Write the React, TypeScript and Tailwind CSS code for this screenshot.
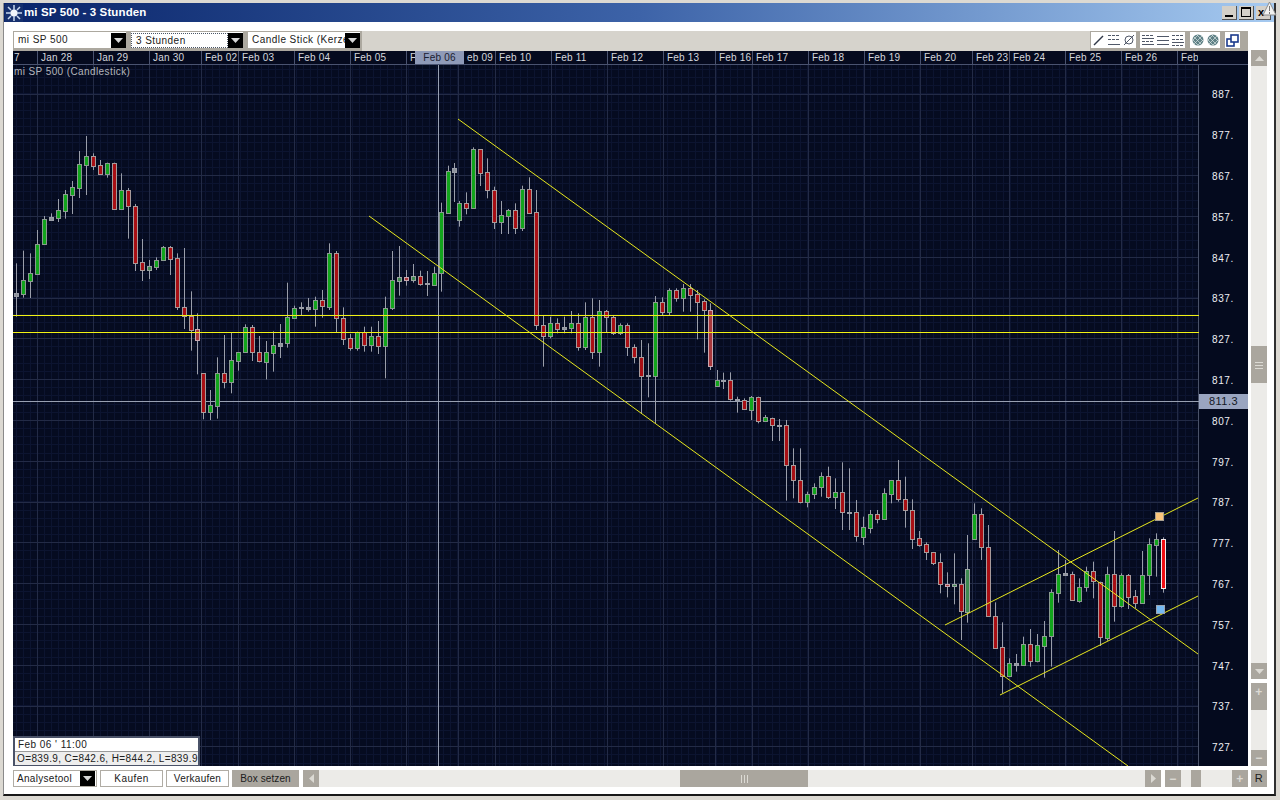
import { ReactNode } from 'react'

type Row = [number, number, number, number, number, string]

// candle rows are [x, wickTop, bodyTop, bodyBottom, wickBottom, colour], read off 3x crops
const GROUPS: { ox: number; oy: number; rows: Row[] }[] = [
  { ox: 10, oy: 130, rows: [
    [19,400,489,497,560,'d'],[40,362,451,491,503,'g'],[61,370,430,452,504,'g'],[82,300,343,431,431,'g'],
    [103,258,268,343,344,'g'],[124,250,262,270,272,'d'],[145,207,240,263,276,'g'],[166,180,193,242,266,'g'],
    [187,153,171,194,252,'g'],[208,63,103,173,204,'g'],[229,18,78,104,195,'g'],[250,70,79,107,120,'r'],
    [271,90,106,131,132,'r'],[292,98,100,131,143,'g'],[313,98,100,236,236,'r'],[334,130,181,236,240,'g'],
    [355,174,181,229,326,'r'],[376,222,229,398,423,'r'],[397,327,397,419,453,'r'],[418,390,408,419,447,'x'],
    [439,382,391,410,420,'g'],[460,348,351,391,392,'g'],[481,348,351,386,435,'r'],[502,370,385,532,540,'r'],
    [523,354,532,559,597,'r'],[544,484,558,599,662,'r'],[562,550,598,630,733,'p'],[580,730,730,845,868,'r'],
    [601,780,826,845,870,'g'],[622,682,730,827,866,'g'],[643,615,730,755,775,'r'],[664,608,691,755,790,'g'],
    [685,667,667,692,722,'g'],[706,583,592,667,667,'g'],[727,585,592,665,693,'r'],[748,618,665,694,697,'r'],
    [769,633,667,695,748,'g'],[790,604,646,668,725,'g'],[811,582,640,647,684,'d'],[832,458,562,640,653,'g'],
    [853,527,533,563,565,'g'],
  ] },
  { ox: 300, oy: 130, rows: [
    [4,517,531,534,555,'d'],[25,504,531,537,545,'d'],[46,500,511,536,590,'g'],[67,480,511,529,563,'r'],
    [88,340,370,530,540,'g'],[109,363,370,565,607,'r'],[130,532,565,626,645,'r'],[151,612,625,653,662,'r'],
    [172,605,606,653,662,'g'],[193,590,607,644,665,'r'],[214,590,619,644,665,'g'],[235,573,619,647,672,'r'],
    [256,500,535,647,745,'g'],[277,363,451,535,540,'g'],[298,348,441,452,497,'x'],[319,420,442,449,467,'p'],
    [340,402,438,450,458,'x'],[361,422,438,461,467,'r'],[382,423,460,463,498,'d'],[403,410,430,464,465,'g'],
    [424,218,247,430,485,'g'],[445,107,124,248,250,'g'],[463,99,114,125,216,'d'],[478,213,220,269,290,'g'],
    [499,187,220,233,253,'r'],[520,52,58,234,237,'g'],[541,58,58,128,168,'r'],[562,85,127,181,205,'r'],
    [583,170,181,275,297,'r'],[604,213,256,275,312,'g'],[625,237,241,257,312,'g'],[646,220,241,293,312,'r'],
    [667,167,178,293,303,'g'],[688,142,178,248,248,'r'],[709,180,247,586,600,'r'],[730,558,586,617,710,'r'],
    [751,560,580,617,625,'g'],[772,565,580,596,610,'r'],[793,560,592,596,610,'d'],[814,543,580,593,610,'g'],
    [835,550,580,650,662,'r'],[856,517,562,650,660,'g'],
  ] },
  { ox: 590, oy: 270, rows: [
    [7,85,142,247,267,'r'],[28,90,124,247,290,'g'],[49,120,124,142,188,'r'],[70,135,142,190,195,'r'],
    [91,160,166,190,195,'g'],[112,160,166,232,258,'r'],[133,223,232,262,280,'r'],[154,210,262,317,430,'r'],
    [175,220,315,318,382,'d'],[196,78,97,317,460,'g'],[217,82,97,125,135,'r'],[238,55,61,125,135,'g'],
    [259,55,61,83,95,'r'],[280,42,55,83,125,'g'],[301,42,55,74,125,'r'],[322,60,73,95,208,'r'],
    [343,88,94,119,248,'r'],[361,100,119,288,300,'p'],[380,300,331,347,350,'g'],[400,308,330,333,357,'d'],
    [421,307,331,388,392,'r'],[442,380,387,390,428,'d'],[463,385,390,418,420,'r'],[484,378,382,419,450,'g'],
    [505,380,382,452,460,'r'],[526,435,441,452,455,'g'],[547,443,443,466,513,'r'],[568,447,465,468,513,'d'],
    [589,450,466,584,692,'r'],[610,535,584,631,685,'r'],[631,535,631,697,700,'r'],[652,665,671,697,712,'g'],
    [673,640,652,671,687,'g'],[694,607,619,652,680,'g'],[715,590,619,682,687,'r'],[736,625,667,682,717,'g'],
    [757,577,667,727,780,'r'],[778,595,725,728,780,'d'],
  ] },
  { ox: 845, oy: 500, rows: [
    [34,0,37,108,125,'r'],[55,50,82,110,135,'g'],[76,30,42,83,100,'g'],[97,30,42,58,70,'r'],
  ] },
  { ox: 880, oy: 450, rows: [
    [13,115,130,208,210,'g'],[34,90,91,131,160,'g'],[55,30,91,146,155,'r'],[76,80,146,179,233,'r'],
    [97,148,179,266,297,'r'],[118,243,265,284,290,'r'],[139,277,283,307,330,'r'],[160,307,307,338,345,'r'],
    [181,310,337,401,430,'r'],[202,367,401,409,442,'p'],[223,310,403,409,463,'x'],[244,385,403,484,570,'r'],
    [262,255,358,485,518,'x'],[281,160,193,267,268,'g'],[302,175,193,290,330,'r'],[323,225,290,499,500,'r'],
    [344,457,499,593,597,'r'],[365,517,592,677,730,'r'],[386,625,640,677,677,'g'],[407,612,640,644,665,'d'],
    [428,560,581,644,645,'g'],[449,537,581,632,650,'r'],[470,552,586,632,637,'g'],[491,513,559,587,683,'g'],
    [512,418,427,559,650,'g'],[533,300,371,428,458,'g'],[554,330,370,374,375,'d'],[575,365,372,451,452,'r'],
    [596,385,412,453,458,'g'],[617,350,362,412,425,'g'],[638,335,362,394,445,'r'],[659,395,395,562,588,'r'],
    [680,350,371,563,572,'g'],[701,243,371,469,515,'r'],[722,370,376,469,473,'g'],[743,372,376,440,477,'r'],
    [764,420,439,460,475,'r'],[785,303,374,460,462,'g'],[806,265,283,374,435,'g'],[827,250,268,284,380,'g'],
    [848,262,268,415,428,'b'],
  ] },
]

const BODY: Record<string, { fill: string; stroke: string }> = {
  g: { fill: '#12a51c', stroke: '#8a9a90' },
  r: { fill: '#a80f14', stroke: '#a89a9a' },
  d: { fill: '#8f949c', stroke: '#9a9ea8' },
  p: { fill: '#a8383c', stroke: '#c8a8b0' },
  x: { fill: '#3f8a50', stroke: '#9aa4a0' },
  b: { fill: '#f00d12', stroke: '#f4e8e8' },
}

const TICKS: [number, string][] = [
  [37,'Jan 28'],[93,'Jan 29'],[149,'Jan 30'],[201,'Feb 02'],[238,'Feb 03'],[294,'Feb 04'],[350,'Feb 05'],
  [406,'F'],[458,'eb 09'],[495,'Feb 10'],[551,'Feb 11'],[607,'Feb 12'],[663,'Feb 13'],[715,'Feb 16'],
  [752,'Feb 17'],[808,'Feb 18'],[864,'Feb 19'],[920,'Feb 20'],[972,'Feb 23'],[1009,'Feb 24'],[1065,'Feb 25'],
  [1121,'Feb 26'],[1177,'Feb'],
]

const PRICES = [887,877,867,857,847,837,827,817,807,797,787,777,767,757,747,737,727]
const priceY = (i: number) => Math.round(93.5 + i * 40.8) + 0.5

function Arrow() {
  return (
    <span className="w-[15px] h-[15px] bg-black flex items-center justify-center shrink-0">
      <svg width="9" height="5"><path d="M0 0h9L4.5 5z" fill="#d8d8d8" /></svg>
    </span>
  )
}

function Combo({ label, focus, w = 'w-[112px]' }: { label: string; focus?: boolean; w?: string }) {
  return (
    <div className={`${w} h-[16px] bg-white flex items-center justify-between`}>
      <span className={`flex-1 h-[15px] overflow-hidden whitespace-nowrap leading-[14px] pl-[4px] ${focus ? 'border border-dotted border-gray-600' : ''}`}>{label}</span>
      <Arrow />
    </div>
  )
}

function Tool({ children }: { children: ReactNode }) {
  return <span className="w-[15px] h-[16px] bg-white flex items-center justify-center">{children}</span>
}

function Lines({ ys }: { ys: number[] }) {
  return (
    <svg width="12" height="12" stroke="#505868">
      {ys.map(y => <path key={y} d={`M0 ${y}.5h12`} strokeDasharray={y % 2 ? '3 1' : undefined} />)}
    </svg>
  )
}

function Hatch() {
  return (
    <svg width="12" height="12">
      <circle cx="6" cy="6" r="5.5" fill="#5f8186" />
      <path d="M2 3l7 7M1 6l5 5M5 1l6 6M10 2L2 10M6 1L1 6M11 6l-5 5" stroke="#d8e4e4" strokeWidth=".7" />
    </svg>
  )
}

function SquareBtn({ children, className = '' }: { children?: ReactNode; className?: string }) {
  return <div className={`bg-[#aaa69e] flex items-center justify-center shrink-0 text-[#dcdad4] ${className}`}>{children}</div>
}

function Plot() {
  const fineV: number[] = []
  for (let x = 16; x < 1199; x += 7) fineV.push(x)
  const fineH: number[] = []
  for (let y = 69; y < 766; y += 8.16) fineH.push(y)
  return (
    <svg className="block shrink-0" width="1186" height="701" viewBox="13 65 1186 701">
      <rect x="13" y="65" width="1186" height="701" fill="#050b20" />
      <g stroke="#0c1430">
        {fineV.map(x => <path key={x} d={`M${x + 0.5} 65V766`} />)}
        {fineH.map(y => <path key={y} d={`M13 ${Math.round(y) + 0.5}H1199`} />)}
      </g>
      <g stroke="#232b46">
        {TICKS.map(([x]) => <path key={x} d={`M${x + 0.5} 65V766`} />)}
        {PRICES.map((p, i) => <path key={p} d={`M13 ${priceY(i)}H1199`} />)}
      </g>
      <path d="M1198.5 65V766" stroke="#4a5268" />
      <path d="M438.5 65V766M13 401.5H1199" stroke="#98a0b2" />
      {GROUPS.flatMap(g => g.rows.map(([zx, wt, bt, bb, wb, c]) => {
        const x = Math.round(g.ox + zx / 3) + 0.5
        const top = Math.round(g.oy + bt / 3) + 0.5
        const bottom = Math.round(g.oy + bb / 3) + 0.5
        return (
          <g key={`${g.ox}-${zx}`}>
            <path d={`M${x} ${g.oy + wt / 3}V${g.oy + wb / 3}`} stroke="#9a9eaa" />
            <rect x={x - 2} y={top} width="4" height={Math.max(bottom - top, 1)} fill={BODY[c].fill} stroke={BODY[c].stroke} />
          </g>
        )
      }))}
      <path d="M13 315.5H1199" stroke="#f2f214" />
      <path d="M13 332.5H1199" stroke="#f2f214" />
      <g stroke="#e8e81e" fill="none">
        <path d="M458 119L1198 654" />
        <path d="M369 216L1128 766" />
        <path d="M945 625L1198 498" />
        <path d="M1000 695L1198 596" />
      </g>
      <rect x="1155.5" y="512.5" width="8" height="8" fill="#fcc67c" stroke="#a8a090" />
      <rect x="1156.5" y="605.5" width="8" height="8" fill="#74b8f2" stroke="#9aa4b0" />
    </svg>
  )
}

export default function App() {
  return (
    <div className="w-[1280px] h-[800px] overflow-hidden bg-[#dcd9d2] pt-[3px] pl-[3px] font-['Liberation_Sans',sans-serif] text-[10px] tracking-[0.45px] text-[#202020] relative">
      <div className="w-[1273px] h-[793px] border-l border-l-[#8a8a8a] border-r-2 border-r-[#303030] border-b-2 border-b-[#181818] bg-white flex flex-col">
        {/* title bar */}
        <div className="h-[19px] shrink-0 bg-gradient-to-r from-[#0a246a] via-[#3d63a8] to-[#a6caf0] flex items-center pl-[1px] pr-[2px]">
          <svg width="18" height="18" viewBox="0 0 18 18" className="shrink-0">
            <rect width="18" height="18" fill="#16306e" />
            <circle cx="9" cy="9" r="3.6" fill="#f2f6fc" />
            <path d="M9 1v5M9 12v5M1 9h5M12 9h5M3 3l3 3M15 3l-3 3M3 15l3-3M15 15l-3-3" stroke="#c8d8f0" strokeWidth="1.5" />
          </svg>
          <span className="ml-[1px] text-white font-bold text-[11.5px] tracking-[0.12px]">mi SP 500 - 3 Stunden</span>
          <div className="ml-auto flex gap-[2px] mr-[1px]">
            <span className="w-[15px] h-[14px] bg-[#d4d0c8] border-r border-b border-[#555] flex items-end justify-center pb-[2px]"><span className="w-[8px] h-[2px] bg-black" /></span>
            <span className="w-[15px] h-[14px] bg-[#d4d0c8] border-r border-b border-[#555] flex items-center justify-center"><span className="w-[10px] h-[10px] border border-t-2 border-black" /></span>
            <span className="w-[15px] h-[14px] bg-[#d4d0c8] border-r border-b border-[#555] text-black text-[11px] leading-[13px] pl-[2px] font-bold">x</span>
          </div>
        </div>

        <div className="flex pl-[9px] pt-[9px] gap-[3px]">
          <div className="w-[1235px] shrink-0 flex flex-col">
            {/* toolbar */}
            <div className="h-[20px] bg-[#d6d3cc] flex items-start">
              <div className="bg-[#aca89f] h-[20px] w-[349px] pt-[1px] pl-[1px] flex gap-[5px]">
                <Combo label="mi SP 500" />
                <Combo label="3 Stunden" focus />
                <Combo label="Candle Stick (Kerze" />
              </div>
              <div className="ml-auto bg-[#aca89f] h-[20px] w-[158px] pt-[1px] pl-[1px] flex">
                <Tool><svg width="11" height="11"><path d="M1 10L10 1" stroke="#303848" strokeWidth="1.4" /></svg></Tool>
                <Tool><Lines ys={[1, 5, 10]} /></Tool>
                <Tool><svg width="12" height="12" fill="none" stroke="#505868"><circle cx="6" cy="6" r="4" /><path d="M1 11L11 1" /></svg></Tool>
                <span className="w-[4px]" />
                <Tool><Lines ys={[1, 4, 7, 10]} /></Tool>
                <Tool><Lines ys={[2, 6, 10]} /></Tool>
                <Tool><Lines ys={[1, 5, 8, 11]} /></Tool>
                <span className="w-[5px]" />
                <Tool><Hatch /></Tool>
                <Tool><Hatch /></Tool>
                <span className="w-[5px]" />
                <Tool>
                  <svg width="13" height="13" fill="white" stroke="#1b3a8c" strokeWidth="1.6"><rect x="1" y="5" width="7" height="7" /><rect x="5" y="1" width="7" height="7" /></svg>
                </Tool>
              </div>
            </div>

            {/* time axis */}
            <div className="h-[14px] bg-[#050a1e] border-b border-[#4a5370] flex text-[#d4d6dc] relative tracking-[0.2px]">
              <span className="w-[24px] overflow-hidden leading-[13px] pl-[1px] shrink-0">7</span>
              {TICKS.map(([x, label], i) => (
                <span
                  key={x}
                  className={`border-l border-[#4a5370] leading-[13px] overflow-hidden whitespace-nowrap shrink-0 ${label === 'eb 09' ? 'pl-[8px]' : 'pl-[3px]'}`}
                  style={{ width: (TICKS[i + 1]?.[0] ?? 1198) - x }}
                >
                  {label}
                </span>
              ))}
              <span className="flex-1" />
              <span className="absolute left-[402px] top-0 w-[49px] h-[13px] bg-[#8f9ab8] text-[#1a2030] text-center leading-[13px]">Feb 06</span>
            </div>

            {/* chart */}
            <div className="h-[701px] flex bg-[#040a1e] relative">
              <Plot />
              <div className="flex-1 pt-[9.6px] pl-[13px] text-[#eef0f4] tracking-[0.6px]">
                {PRICES.map(p => <div key={p} className="h-[40.8px] flex items-center">{p}.</div>)}
              </div>
              <span className="absolute left-[1px] top-[1px] text-[#b4b6bc] leading-[12px] tracking-[0.4px]">mi SP 500 (Candlestick)</span>
              <span className="absolute left-[1186px] top-[329px] w-[49px] h-[15px] bg-[#9aa5c0] text-[#141824] text-center leading-[15px] text-[11px]">811.3</span>
              <div className="absolute left-0 bottom-0 w-[187px] h-[30px] border-2 border-[#4a5268] bg-white flex flex-col">
                <span className="h-[13px] leading-[13px] pl-[3px]">Feb 06 ' 11:00</span>
                <span className="flex-1 bg-[#eeeeee] border-t border-[#9a9a9a] leading-[13px] pl-[2px] whitespace-nowrap tracking-[0.38px]">O=839.9, C=842.6, H=844.2, L=839.9</span>
              </div>
            </div>

            {/* bottom controls */}
            <div className="h-[17px] mt-[4px] flex">
              <div className="w-[84px] border border-[#b0aca4] flex items-center justify-between pl-[3px] pr-[1px] tracking-[0.3px]">
                <span>Analysetool</span>
                <Arrow />
              </div>
              <div className="w-[63px] ml-[3px] border border-[#b0aca4] flex items-center justify-center">Kaufen</div>
              <div className="w-[63px] ml-[3px] border border-[#b0aca4] flex items-center justify-center tracking-[0.25px]">Verkaufen</div>
              <div className="w-[67px] ml-[3px] bg-[#aaa69e] flex items-center justify-center tracking-[0.1px]">Box setzen</div>
              <div className="w-[858px] ml-[4px] bg-[#ecebe8] flex">
                <SquareBtn className="w-[16px]"><svg width="5" height="9" fill="currentColor"><path d="M5 0v9L0 4.5z" /></svg></SquareBtn>
                <span className="w-[361px]" />
                <SquareBtn className="w-[128px] text-[#8c887f]">
                  <svg width="8" height="8" stroke="currentColor"><path d="M1.5 0v8M4.5 0v8M7.5 0v8" /></svg>
                </SquareBtn>
                <span className="flex-1" />
                <SquareBtn className="w-[16px]"><svg width="5" height="9" fill="currentColor"><path d="M0 0v9l5-4.5z" /></svg></SquareBtn>
              </div>
              <div className="w-[83px] ml-[4px] bg-[#ecebe8] flex">
                <SquareBtn className="w-[16px] font-bold text-[12px]">−</SquareBtn>
                <span className="w-[10px]" />
                <SquareBtn className="w-[10px]" />
                <span className="flex-1" />
                <SquareBtn className="w-[16px] font-bold text-[12px]">+</SquareBtn>
              </div>
            </div>
          </div>

          {/* right scrollbars */}
          <div className="w-[16px] shrink-0 mt-[19px] flex flex-col">
            <SquareBtn className="h-[16px]"><svg width="9" height="5" fill="currentColor"><path d="M0 5h9L4.5 0z" /></svg></SquareBtn>
            <div className="h-[597px] bg-[#ecebe8] flex flex-col">
              <span className="h-[280px]" />
              <SquareBtn className="h-[37px] text-[#8c887f]">
                <svg width="8" height="8" stroke="currentColor"><path d="M0 1.5h8M0 4.5h8M0 7.5h8" /></svg>
              </SquareBtn>
            </div>
            <SquareBtn className="h-[16px]"><svg width="9" height="5" fill="currentColor"><path d="M0 0h9L4.5 5z" /></svg></SquareBtn>
            <div className="h-[83px] mt-[4px] bg-[#ecebe8] flex flex-col">
              <SquareBtn className="h-[17px] font-bold text-[12px]">+</SquareBtn>
              <SquareBtn className="h-[10px]" />
              <span className="flex-1" />
              <SquareBtn className="h-[16px] font-bold text-[12px]">−</SquareBtn>
            </div>
            <SquareBtn className="h-[17px] mt-[4px] !text-[#202020] text-[11px]">R</SquareBtn>
          </div>
        </div>
      </div>

      {/* warning triangle that sits over the close button */}
      <svg className="absolute left-[1262px] top-[1px]" width="15" height="15" viewBox="0 0 15 15">
        <path d="M7.5 1L14 14H1z" fill="#f2f2f0" stroke="#8c8c8c" />
        <path d="M7.5 5v5M7.5 11v2" stroke="#787878" />
      </svg>
    </div>
  )
}
